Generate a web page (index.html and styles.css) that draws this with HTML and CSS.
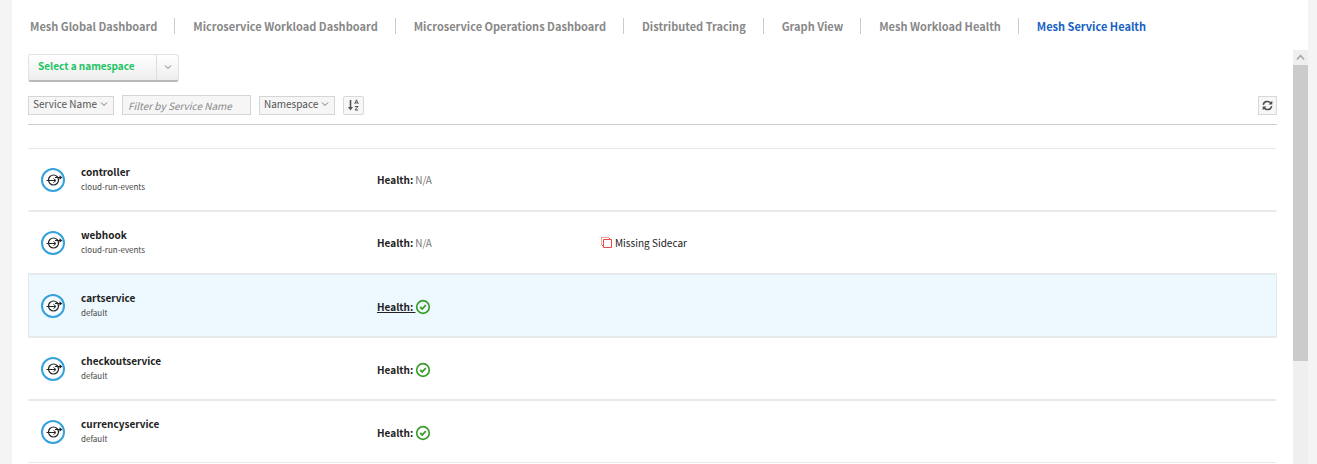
FILE: index.html
```html
<!DOCTYPE html>
<html lang="en">
<head>
<meta charset="utf-8">
<meta name="viewport" content="width=device-width, initial-scale=1">
<title>Mesh Service Health</title>
<link rel="stylesheet" href="styles.css">
</head>
<body>
<svg class="sprite" aria-hidden="true">
  <symbol id="service" viewBox="0 0 26 26">
    <circle cx="13" cy="13" r="11" fill="#fff" fill-opacity="0.600" stroke="#35a2dc" stroke-width="2"/>
    <circle cx="13.500" cy="13" r="5" fill="none" stroke="#222" stroke-width="1.200"/>
    <path d="M6.500 13.500H15M13.500 11.500L16 13.500L13.500 15.500M15 10.500H20.500" fill="none" stroke="#222" stroke-width="1"/>
    <path d="M19.500 8.300L22.300 10.500L19.500 12.700Z" fill="#222"/>
  </symbol>
  <symbol id="healthy" viewBox="0 0 16 16">
    <circle cx="8" cy="8" r="6.300" fill="none" stroke="#3a9d2b" stroke-width="1.700"/>
    <path d="M5.200 8L7.200 10L10.800 6.200" fill="none" stroke="#3a9d2b" stroke-width="1.800"/>
  </symbol>
  <symbol id="chevron" viewBox="0 0 8 8">
    <path d="M1 2.500L4 5.500L7 2.500" fill="none" stroke="#777" stroke-width="1"/>
  </symbol>
</svg>
<div class="panel">
  <nav class="tabs">
    <a class="tab" href="#global">Mesh Global Dashboard</a>
    <a class="tab" href="#workload">Microservice Workload Dashboard</a>
    <a class="tab" href="#operations">Microservice Operations Dashboard</a>
    <a class="tab" href="#tracing">Distributed Tracing</a>
    <a class="tab" href="#graph">Graph View</a>
    <a class="tab" href="#workload-health">Mesh Workload Health</a>
    <a class="tab active" href="#service-health" aria-current="page">Mesh Service Health</a>
  </nav>
  <div class="body">
    <main class="content">
      <button class="namespace" type="button">
        <span class="namespace-label">Select a namespace</span>
        <span class="namespace-arrow"><svg class="chevron"><use href="#chevron"/></svg></span>
      </button>
      <div class="toolbar">
        <button class="picker" type="button">Service Name <svg class="chevron"><use href="#chevron"/></svg></button>
        <input class="filter" type="text" placeholder="Filter by Service Name" aria-label="Filter by Service Name">
        <button class="picker" type="button">Namespace <svg class="chevron"><use href="#chevron"/></svg></button>
        <button class="icon-button sort" type="button" aria-label="Sort direction">
          <svg width="13" height="14" viewBox="0 0 13 14" fill="none" stroke="#555">
            <path d="M3.500 2V10" stroke-width="1.600"/>
            <path d="M1 9H6L3.500 12.500Z" fill="#555" stroke="none"/>
            <path d="M7.700 6L9.500 1.800L11.300 6M8.400 4.800H10.600M7.800 8.500H11L8 12H11.200" stroke-width="1"/>
          </svg>
        </button>
        <button class="icon-button refresh" type="button" aria-label="Refresh">
          <svg width="11" height="11" viewBox="0 0 11 11" fill="none" stroke="#4c4c4c" stroke-width="1.500">
            <path d="M1.300 4.800C1.700 1.300 6.500 0.200 8.800 3M9.700 6.200C9.300 9.700 4.500 10.800 2.200 8"/>
            <path d="M10.300 0.800V4.600H6.500ZM0.700 10.200V6.400H4.500Z" fill="#4c4c4c" stroke="none"/>
          </svg>
        </button>
      </div>
      <ul class="services">
        <li class="service">
          <svg class="service-icon"><use href="#service"/></svg>
          <div class="identity"><strong class="name">controller</strong><span class="scope">cloud-run-events</span></div>
          <div class="health"><b>Health:</b> <span class="na">N/A</span></div>
        </li>
        <li class="service">
          <svg class="service-icon"><use href="#service"/></svg>
          <div class="identity"><strong class="name">webhook</strong><span class="scope">cloud-run-events</span></div>
          <div class="health"><b>Health:</b> <span class="na">N/A</span></div>
          <div class="issue">
            <svg width="11" height="11" viewBox="0 0 11 11" fill="none" stroke="#f0484c">
              <path d="M2.500 2.500H10.500V10.500H2.500Z"/>
              <path d="M0.500 0.500H8M0.500 0.500V8.500M1 8.500H3M8.500 1V3" stroke-dasharray="1 1"/>
            </svg>
            Missing Sidecar
          </div>
        </li>
        <li class="service selected">
          <svg class="service-icon"><use href="#service"/></svg>
          <div class="identity"><strong class="name">cartservice</strong><span class="scope">default</span></div>
          <div class="health"><b class="underlined">Health:&nbsp;</b><svg class="check" role="img" aria-label="Healthy"><use href="#healthy"/></svg></div>
        </li>
        <li class="service">
          <svg class="service-icon"><use href="#service"/></svg>
          <div class="identity"><strong class="name">checkoutservice</strong><span class="scope">default</span></div>
          <div class="health"><b>Health:&nbsp;</b><svg class="check" role="img" aria-label="Healthy"><use href="#healthy"/></svg></div>
        </li>
        <li class="service">
          <svg class="service-icon"><use href="#service"/></svg>
          <div class="identity"><strong class="name">currencyservice</strong><span class="scope">default</span></div>
          <div class="health"><b>Health:&nbsp;</b><svg class="check" role="img" aria-label="Healthy"><use href="#healthy"/></svg></div>
        </li>
      </ul>
    </main>
    <div class="scrollbar" aria-hidden="true">
      <svg class="scroll-up" viewBox="0 0 15 15"><path d="M4 9.500L7.500 5.500L11 9.500" fill="none" stroke="#aaa" stroke-width="1.800"/></svg>
      <div class="thumb"></div>
    </div>
  </div>
</div>
</body>
</html>
```

FILE: styles.css
```css
* { box-sizing: border-box; }

body {
  margin: 0;
  background: #f4f4f4;
  color: #222;
  font: 10px/16px "Noto Sans CJK SC", "Noto Sans", sans-serif;
}

button, input { font: inherit; margin: 0; }

.sprite { display: none; }

.panel {
  display: flex;
  flex-direction: column;
  height: 100vh;
  margin: 0 9px 0 12px;
  overflow: hidden;
  background: #fff;
}

.tabs {
  display: flex;
  flex: none;
  align-items: center;
  height: 50px;
  padding-top: 2px;
}

.tab {
  padding: 0 17px 0 18px;
  border-left: 1px solid #ccc;
  color: #888;
  font-size: 11px;
  font-weight: 700;
  white-space: nowrap;
  text-decoration: none;
}

.tab:first-child { border-left: 0; }
.tab.active { color: #1762c5; }

.body {
  display: flex;
  flex: 1;
  min-height: 0;
}

.content {
  flex: 1;
  min-width: 0;
  padding: 4px 16px 0;
}

.namespace {
  display: flex;
  align-items: stretch;
  height: 28px;
  padding: 0;
  border: 1px solid #e2e2e2;
  border-bottom: 2px solid #b9b9b9;
  border-radius: 3px;
  background: linear-gradient(#fff, #eee);
  color: #20c464;
  font-weight: 700;
}

.namespace-label { padding: 3px 21px 0 9px; }

.namespace-arrow {
  display: flex;
  align-items: center;
  padding: 0 6px 2px 7px;
  border-left: 1px solid #ddd;
}

.chevron { width: 8px; height: 8px; }

.toolbar {
  display: flex;
  align-items: center;
  gap: 8px;
  height: 43px;
  padding-top: 4px;
  border-bottom: 1px solid #ccc;
}

.picker {
  display: flex;
  align-items: center;
  gap: 3px;
  height: 19px;
  padding: 0 5px 2px 4px;
  border: 1px solid #d5d5d5;
  background: #f6f6f6;
  color: #555;
}

.filter {
  width: 129px;
  height: 20px;
  padding: 0 5px;
  border: 1px solid #d5d5d5;
  border-radius: 0;
  background: #f6f6f6;
}

.filter::placeholder {
  color: #888;
  font-style: italic;
  opacity: 1;
}

.icon-button {
  display: grid;
  place-items: center;
  height: 19px;
  padding: 0;
  border: 1px solid #d8d8d8;
  background: #f7f7f7;
}

.sort { width: 21px; border-radius: 2px; }
.refresh { width: 19px; margin-left: auto; }

.services {
  margin: 23px 0 0;
  padding: 0;
  list-style: none;
}

.service {
  display: grid;
  grid-template-columns: 41px 296px 224px 1fr;
  align-items: center;
  height: 63px;
  padding: 0 11px;
  border: 1px solid transparent;
  border-top-color: #e9e9e9;
  border-bottom-color: #e9e9e9;
}

.service.selected {
  border-color: #e2eaed;
  background: #edf8ff;
}

.service-icon { width: 26px; height: 26px; }

.identity { display: flex; flex-direction: column; padding-bottom: 2px; }

.scope { color: #444; font-size: 8px; line-height: 14px; }

.health, .issue { display: flex; align-items: center; }

.health { gap: 2px; }
.health .underlined { text-decoration: underline; }
.health:has(.check) { gap: 0; padding-top: 2px; }
.issue { gap: 3px; }

.na { color: #777; }

.check { width: 16px; height: 16px; }

.scrollbar { flex: none; width: 15px; background: #efefef; }

.scroll-up { display: block; width: 15px; height: 15px; }

.thumb { height: 296px; background: #cbcbcb; }
```
